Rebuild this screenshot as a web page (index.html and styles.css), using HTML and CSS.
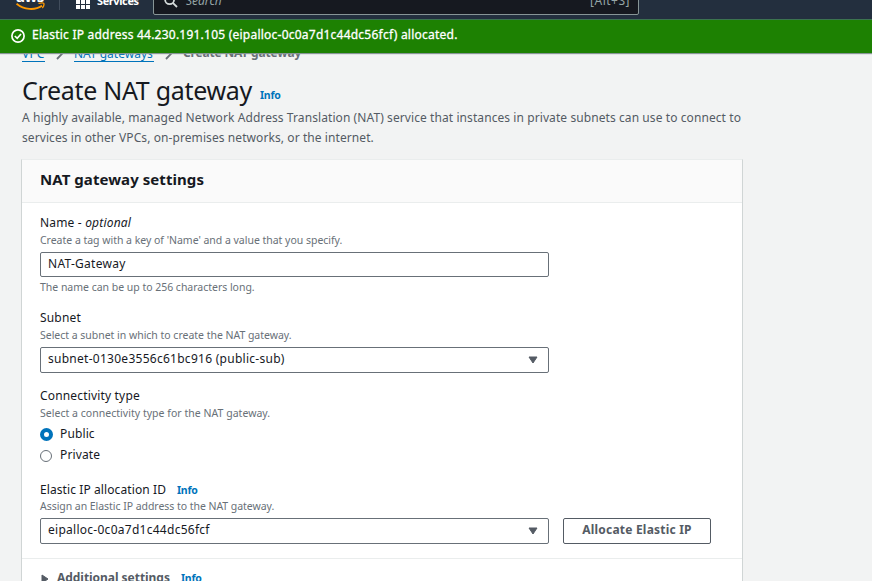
FILE: index.html
```html
<!DOCTYPE html>
<html lang="en">
<head>
<meta charset="utf-8">
<title>Create NAT gateway</title>
<link rel="stylesheet" href="styles.css">
</head>
<body>
<header class="topbar">
  <div class="topbar-inner">
    <div class="logo">
      <span class="logo-text">aws</span>
      <svg class="logo-smile" width="30" height="9" viewBox="0 0 30 9" fill="none" stroke="#ff9900"><path d="M.5 1.8C8 8 19 8.6 26 3.8" stroke-width="1.8"/><path d="M22.5 1.4C25 .7 27.2 .7 27.8 1.4C28.2 2.5 27.5 4.7 26.3 6" stroke-width="1.3"/></svg>
    </div>
    <span class="topbar-divider"></span>
    <svg class="grid-icon" width="14" height="14" viewBox="0 0 14 14" fill="#fff"><path d="M0 0h4v4H0zM5 0h4v4H5zM10 0h4v4h-4zM0 5h4v4H0zM5 5h4v4H5zM10 5h4v4h-4zM0 10h4v4H0zM5 10h4v4H5zM10 10h4v4h-4z"/></svg>
    <span class="services">Services</span>
    <div class="search">
      <svg width="14" height="14" viewBox="0 0 14 14" fill="none" stroke="#d5dbdb" stroke-width="1.8"><circle cx="5.6" cy="5.6" r="4.5"/><path d="M8.8 8.8L13 13"/></svg>
      <span class="search-hint">Search</span>
      <span class="search-key">[Alt+S]</span>
    </div>
  </div>
</header>
<div class="flash">
  <svg width="14" height="14" viewBox="0 0 14 14" fill="none" stroke="#fff" stroke-width="1.7"><circle cx="7" cy="7" r="6.1"/><path d="M3.8 7L6.2 9.3L10 5"/></svg>
  <span>Elastic IP address 44.230.191.105 (eipalloc-0c0a7d1c44dc56fcf) allocated.</span>
</div>
<main class="page">
  <nav class="crumbs">
    <a class="crumb crumb-vpc">VPC</a>
    <svg width="8" height="14" viewBox="0 0 8 14" fill="none" stroke="#687078" stroke-width="1.8"><path d="M1 1L6.8 7L1 13"/></svg>
    <a class="crumb crumb-nat">NAT gateways</a>
    <svg width="8" height="14" viewBox="0 0 8 14" fill="none" stroke="#687078" stroke-width="1.8"><path d="M1 1L6.8 7L1 13"/></svg>
    <span class="crumb-current">Create NAT gateway</span>
  </nav>
  <div class="title-row"><h1>Create NAT gateway</h1><a class="info">Info</a></div>
  <p class="intro">A highly available, managed Network Address Translation (NAT) service that instances in private subnets can use to connect to <br>services in other VPCs, on-premises networks, or the internet.</p>
  <section class="card">
    <div class="card-head"><h2>NAT gateway settings</h2></div>
    <div class="card-body">
      <div class="field">
        <div class="label">Name - <i>optional</i></div>
        <div class="help">Create a tag with a key of 'Name' and a value that you specify.</div>
        <div class="control input"><span>NAT-Gateway</span></div>
        <div class="help constraint">The name can be up to 256 characters long.</div>
      </div>
      <div class="field subnet">
        <div class="label">Subnet</div>
        <div class="help">Select a subnet in which to create the NAT gateway.</div>
        <div class="control select"><span>subnet-0130e3556c61bc916 (public-sub)</span><svg width="10" height="8" viewBox="0 0 10 8" fill="#545b64" stroke="#545b64" stroke-linejoin="round"><path d="M1 1h8L5 7z"/></svg></div>
      </div>
      <div class="field connectivity">
        <div class="label">Connectivity type</div>
        <div class="help help-type">Select a connectivity type for the NAT gateway.</div>
        <div class="radios">
          <div class="radio"><span class="dot checked"></span><span>Public</span></div>
          <div class="radio"><span class="dot"></span><span>Private</span></div>
        </div>
      </div>
      <div class="field">
        <div class="label allocation">Elastic IP allocation ID<a class="info">Info</a></div>
        <div class="help help-assign">Assign an Elastic IP address to the NAT gateway.</div>
        <div class="control-row">
          <div class="control select"><span>eipalloc-0c0a7d1c44dc56fcf</span><svg width="10" height="8" viewBox="0 0 10 8" fill="#545b64" stroke="#545b64" stroke-linejoin="round"><path d="M1 1h8L5 7z"/></svg></div>
          <div class="button">Allocate Elastic IP</div>
        </div>
      </div>
    </div>
    <div class="additional">
      <svg width="8" height="10" viewBox="0 0 8 10" fill="#545b64" stroke="#545b64" stroke-linejoin="round"><path d="M1 1v8L7 5z"/></svg>
      <span class="additional-title">Additional settings</span><a class="info">Info</a>
    </div>
  </section>
</main>
</body>
</html>
```
FILE: styles.css
```css
* { box-sizing: border-box; }
body {
  margin: 0;
  height: 581px;
  overflow: hidden;
  display: flex;
  flex-direction: column;
  background: #f2f3f3;
  color: #16191f;
  font: 12px/20px "Noto Sans", "Open Sans", sans-serif;
}
h1, h2, p { margin: 0; }
svg { display: block; flex: none; }

.topbar { height: 19px; flex: none; background: #232f3e; overflow: hidden; }
.topbar-inner { display: flex; height: 32px; margin-top: -16px; align-items: center; }
.logo { width: 30px; margin-left: 16px; height: 32px; padding-top: 7px; }
.logo-text { display: block; height: 11px; color: #fff; font-size: 15px; font-weight: 700; line-height: 10px; letter-spacing: -.5px; }
.topbar-divider { width: 1px; height: 26px; margin: 0 16px 0 13px; background: #414d5c; align-self: flex-start; }
.grid-icon { margin-bottom: -3px; }
.services { margin: 1px 0 0 7px; width: 41px; white-space: nowrap; color: #fff; font-size: 11px; font-weight: 700; letter-spacing: -.4px; }
.search { margin-left: 15px; width: 486px; height: 32px; margin-top: -3px; padding: 4px 8px 0 10px; display: flex; align-items: center; border: 1px solid #879596; border-radius: 2px; background: #161920; color: #95a5a6; }
.search svg { margin-top: 1px; }
.search-hint { margin: 1px 0 0 8px; font-style: italic; }
.search-key { margin: 1px 0 0 auto; letter-spacing: .5px; }

.flash { height: 34px; flex: none; z-index: 1; display: flex; align-items: center; gap: 8px; padding: 0 11px 4px 11px; background: #1d8102; color: #fff; -webkit-text-stroke: .3px #fff; letter-spacing: .23px; white-space: nowrap; box-shadow: 0 1px 1px #879596; border-top: 1px solid #3c7350; }
.flash svg { margin-top: 3px; }
.flash span { margin-left: -1px; }

.page { flex: 1; min-height: 0; overflow: hidden; padding-left: 22px; }
.crumbs { display: flex; align-items: center; height: 20px; margin-top: -10px; }
.crumbs svg { margin: 0 10px 0 11px; }
.crumb { height: 18px; line-height: 19px; color: #0073bb; border-bottom: 1px solid #0073bb; white-space: nowrap; }
.crumb-vpc { width: 23px; letter-spacing: .2px; }
.crumb-nat { width: 80px; }
.crumb-current { font-weight: 700; color: #687078; letter-spacing: -.17px; }
.title-row { display: flex; padding-top: 12px; height: 45px; line-height: 30px; }
h1 { font-size: 25px; font-weight: 400; letter-spacing: -.303px; width: 238px; white-space: nowrap; }
.info { color: #0073bb; font-size: 10.5px; font-weight: 700; letter-spacing: -.25px; }
.title-row .info { line-height: 41px; }
.intro { color: #545b64; letter-spacing: .084px; white-space: nowrap; }

.card { width: 722px; margin: 11px 0 0 -1px; border: 1px solid #d0d5d5; border-top-color: #eaeded; background: #fff; }
.card-head { display: flex; align-items: center; height: 43px; padding: 0 18px 4px; background: #fafafa; border-bottom: 1px solid #eaeded; }
h2 { font-size: 15px; font-weight: 700; letter-spacing: .062px; }
.card-body { height: 355px; padding: 10px 18px 0; }
.field { height: 95px; }
.label { height: 19px; line-height: 20px; letter-spacing: .17px; }
.label i { letter-spacing: .2px; }
.help { height: 16px; line-height: 17px; font-size: 10.5px; color: #687078; letter-spacing: -.02px; white-space: nowrap; }
.help-type { letter-spacing: .03px; }
.help-assign { letter-spacing: -.045px; }
.control { width: 509px; height: 26px; margin-top: 4px; padding: 0 10px 2px 7px; display: flex; align-items: center; justify-content: space-between; border: 1px solid #687078; border-radius: 2px; letter-spacing: .27px; background: #fff; }
.input { height: 25px; }
.constraint { margin-top: 2px; }
.select svg { margin-top: 2px; }
.subnet { height: 78px; }
.connectivity { height: 94px; }
.radios { margin-top: 3px; }
.radio { display: flex; height: 21px; gap: 8px; line-height: 20px; letter-spacing: .12px; }
.dot { width: 12px; height: 12px; margin-top: 5px; border: 1px solid #687078; border-radius: 50%; background: #fff; }
.dot.checked { width: 13px; height: 13px; margin: 4px -1px 0 0; border: 4px solid #0073bb; }
.allocation { height: 18px; letter-spacing: .094px; }
.allocation .info { margin-left: 11px; }
.control-row { display: flex; gap: 14px; }
.button { width: 148px; height: 26px; margin-top: 4px; border: 1px solid #545b64; border-radius: 2px; color: #545b64; font-weight: 700; line-height: 22px; letter-spacing: .207px; text-align: center; }
.additional { display: flex; height: 40px; padding: 9px 19px 0; border-top: 1px solid #eaeded; }
.additional svg { margin-top: 6px; }
.additional-title { margin-left: 8px; width: 124px; font-weight: 700; color: #545b64; letter-spacing: -.04px; white-space: nowrap; }
.additional .info { line-height: 20px; }
```
